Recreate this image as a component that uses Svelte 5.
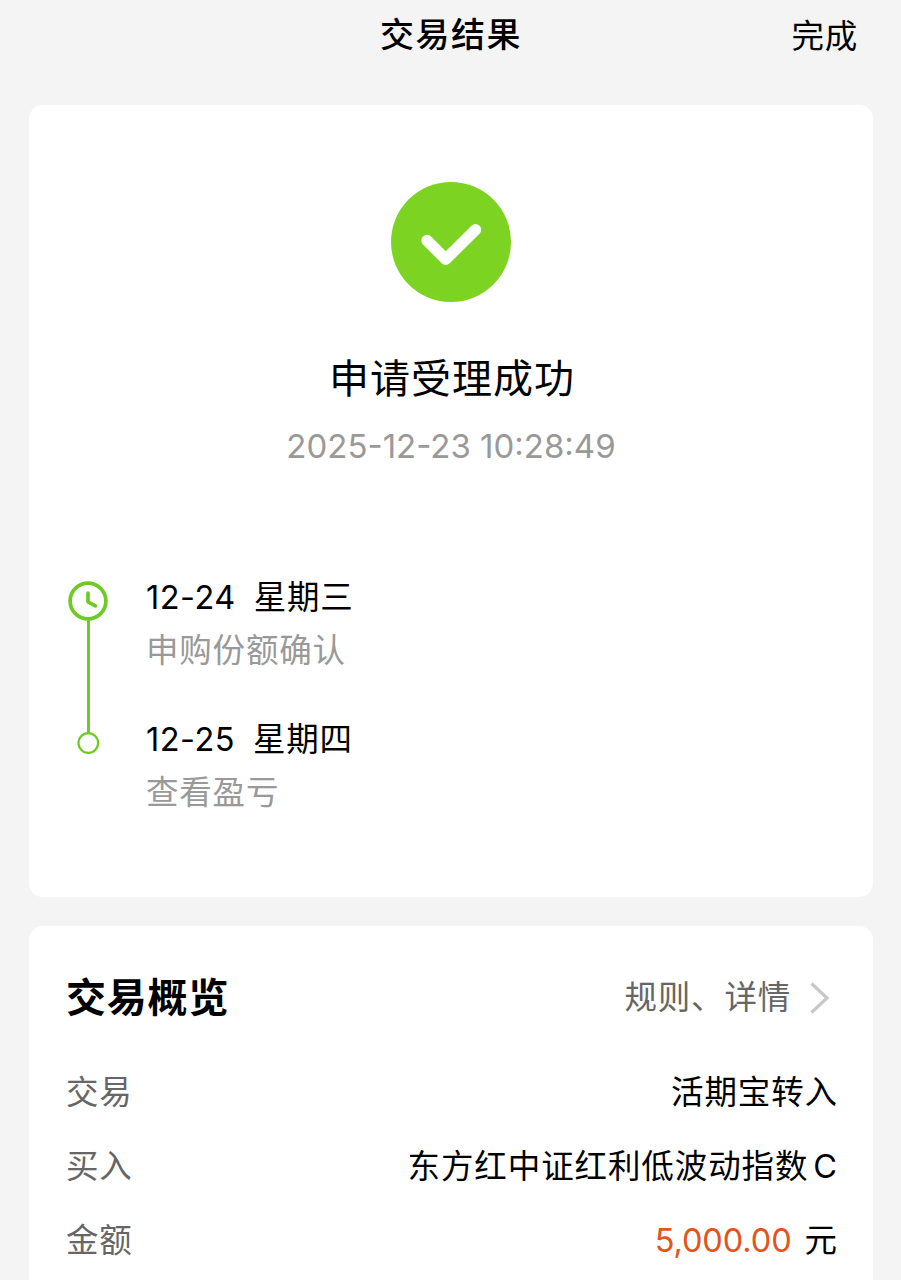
<script>
  const steps = [
    { date: '12-24', day: '星期三', note: '申购份额确认' },
    { date: '12-25', day: '星期四', note: '查看盈亏' },
  ];
</script>

<div class="page">
  <header class="topbar">
    <h1>交易结果</h1>
    <span class="done">完成</span>
  </header>

  <section class="card result">
    <svg class="success" viewBox="0 0 120 120" width="120" height="120" aria-hidden="true">
      <circle cx="60" cy="60" r="60" fill="#7dd321" />
      <path d="M36 58.5 L54.7 77.2 L84.5 47.7" fill="none" stroke="#fff" stroke-width="11.4" stroke-linecap="round" stroke-linejoin="round" />
    </svg>
    <h2>申请受理成功</h2>
    <time class="stamp">2025-12-23 10:28:49</time>

    <div class="timeline">
      <svg class="rail" viewBox="0 0 40 174" width="40" height="174" fill="none" stroke="#6fca25" aria-hidden="true">
        <circle cx="20" cy="20" r="17.9" stroke-width="3.7" />
        <path d="M20 12.2 V20.8 L27.4 24.8" stroke-width="3.7" stroke-linecap="round" stroke-linejoin="round" />
        <path d="M20.5 38 V152" stroke-width="3" />
        <circle cx="20.3" cy="162" r="9.8" stroke-width="2.2" />
      </svg>
      <ol>
        {#each steps as step}
          <li>
            <div class="when"><span class="num">{step.date}</span><span>{step.day}</span></div>
            <div class="note">{step.note}</div>
          </li>
        {/each}
      </ol>
    </div>
  </section>

  <section class="card overview">
    <div class="head">
      <h3>交易概览</h3>
      <div class="more">
        <span>规则、详情</span>
        <svg viewBox="0 0 20 32" width="20" height="32" fill="none" stroke="#c8c8c8" stroke-width="3.2" aria-hidden="true">
          <path d="M1.5 1.5 L17 16 L1.5 30.5" />
        </svg>
      </div>
    </div>
    <div class="row"><span class="label">交易</span><span class="value">活期宝转入</span></div>
    <div class="row"><span class="label">买入</span><span class="value">东方红中证红利低波动指数<span class="class-tag">C</span></span></div>
    <div class="row"><span class="label">金额</span><span class="value"><span class="amount">5,000.00</span>元</span></div>
  </section>
</div>

<style>
  :global(body) { background: #f4f4f4; }
  .page {
    box-sizing: border-box;
    height: 1280px;
    overflow: hidden;
    padding: 0 28px 0 29px;
    background: #f4f4f4;
    color: #000;
    font-family: Inter, "Noto Sans CJK SC", sans-serif;
    font-size: 32.5px;
    letter-spacing: 0.8px;
  }
  h1, h2, h3, ol { margin: 0; padding: 0; }
  .topbar {
    height: 105px;
    display: grid;
    grid-template-columns: 1fr auto 1fr;
    align-items: start;
  }
  h1 {
    grid-column: 2;
    font-size: 34px;
    font-weight: 500;
    line-height: 48px;
    letter-spacing: 1.5px;
    padding-top: 11px;
  }
  .done {
    justify-self: end;
    line-height: 48px;
    padding: 13px 15px 0 0;
  }
  .card { background: #fff; border-radius: 14px; }
  .result {
    box-sizing: border-box;
    height: 792px;
    padding-top: 77px;
    display: flex;
    flex-direction: column;
    align-items: center;
  }
  .success { display: block; }
  h2 {
    margin-top: 47px;
    padding-left: 2px;
    font-size: 40px;
    font-weight: 400;
    line-height: 60px;
    letter-spacing: 1px;
  }
  .stamp {
    margin-top: 12px;
    color: #999;
    font-size: 33px;
    line-height: 50px;
    letter-spacing: 0;
  }
  .timeline {
    align-self: stretch;
    display: flex;
    gap: 38px;
    margin-top: 101px;
    padding-left: 39px;
  }
  .rail { flex: none; margin-top: 9px; }
  ol { list-style: none; }
  li { height: 142px; line-height: 52px; }
  .when { display: flex; gap: 18px; }
  .num { letter-spacing: 0.5px; }
  .note { color: #999; line-height: 54px; }
  .overview { margin-top: 29px; padding: 35px 35px 0 37px; height: 400px; }
  .head { display: flex; justify-content: space-between; height: 95px; line-height: 73px; }
  h3 { font-size: 40px; font-weight: 700; }
  .more { display: flex; align-items: center; height: 73px; gap: 19px; color: #666; padding-right: 8px; }
  .row { display: flex; justify-content: space-between; height: 74px; line-height: 74px; }
  .label { color: #666; }
  .value { letter-spacing: 0.9px; }
  .class-tag { margin-left: 5px; }
  .amount { color: #e2541c; margin-right: 13px; letter-spacing: -0.1px; }
</style>
